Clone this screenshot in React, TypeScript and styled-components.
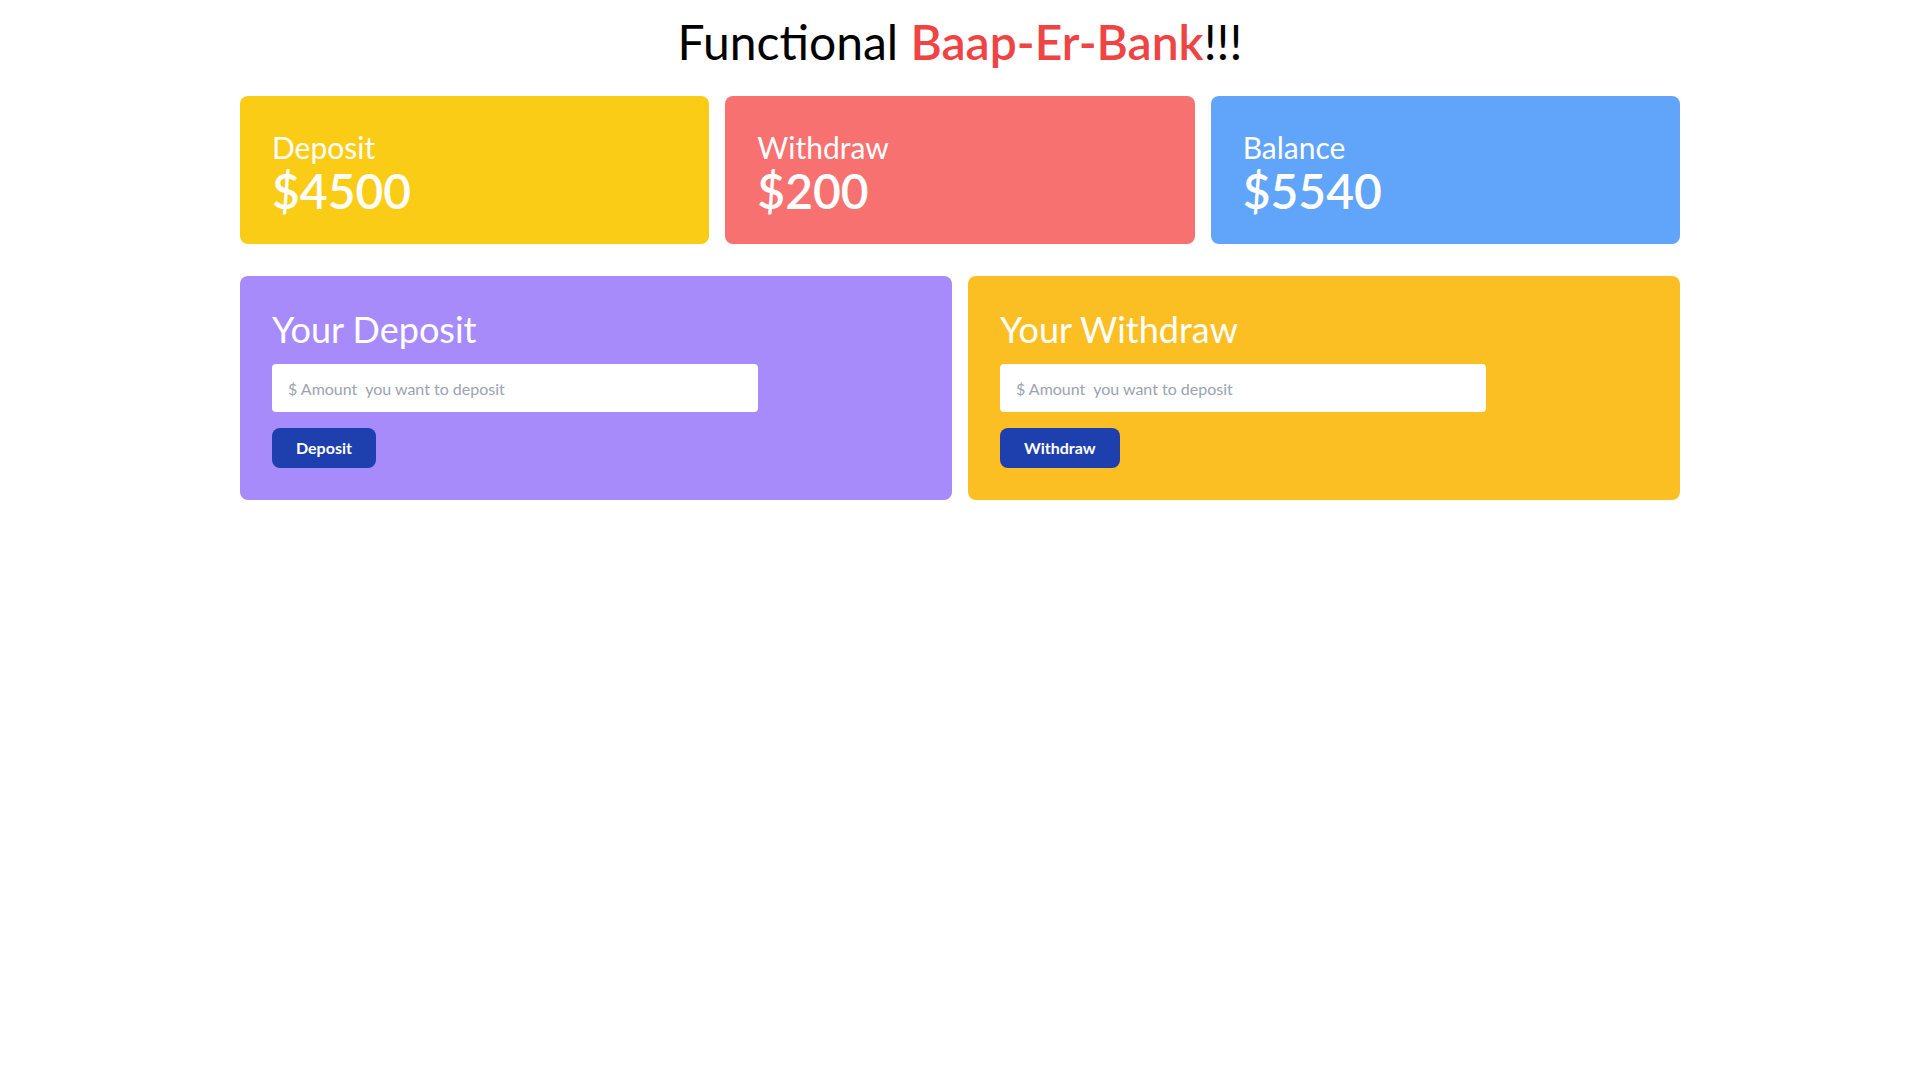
import React from "react";
import styled, { createGlobalStyle } from "styled-components";

const GlobalStyle = createGlobalStyle`
  * { box-sizing: border-box; }
  body {
    margin: 0;
    background: #ffffff;
    font-family: "Lato", "Open Sans", sans-serif;
    color: #000000;
  }
`;

const Page = styled.main`
  width: 75%;
  margin: 0 auto;
`;

const Title = styled.h1`
  margin: 18px 0 30px;
  text-align: center;
  font-size: 48px;
  line-height: 48px;
  font-weight: 400;
`;

const Brand = styled.span`
  color: #ef4444;
  font-weight: 600;
`;

const StatsGrid = styled.section`
  display: grid;
  grid-template-columns: repeat(3, 1fr);
  gap: 16px;
`;

const StatCard = styled.div<{ $bg: string }>`
  background: ${(p) => p.$bg};
  border-radius: 8px;
  padding: 33px 32px 29px;
  color: #ffffff;
`;

const StatLabel = styled.h2`
  margin: 0;
  font-size: 30px;
  line-height: 36px;
  font-weight: 400;
`;

const StatValue = styled.h3`
  margin: 2px 0 0;
  font-size: 48px;
  line-height: 48px;
  font-weight: 600;
`;

const ActionGrid = styled.section`
  display: grid;
  grid-template-columns: repeat(2, 1fr);
  gap: 16px;
  margin-top: 32px;
`;

const ActionCard = styled.div<{ $bg: string }>`
  background: ${(p) => p.$bg};
  border-radius: 8px;
  padding: 32px;
`;

const ActionTitle = styled.h2`
  margin: 1px 0 -1px;
  color: #ffffff;
  font-size: 36px;
  line-height: 40px;
  font-weight: 400;
`;

const AmountInput = styled.input`
  display: block;
  width: 75%;
  margin-top: 16px;
  padding: 12px 16px;
  border: none;
  border-radius: 4px;
  background: #ffffff;
  font-family: inherit;
  font-size: 16px;
  line-height: 24px;
  height: 48px;
  outline: none;
  &::placeholder {
    color: #9ca3af;
  }
`;

const ActionButton = styled.button`
  display: block;
  margin-top: 16px;
  padding: 8px 24px;
  border: none;
  border-radius: 8px;
  background: #1e40af;
  color: #ffffff;
  font-family: inherit;
  font-size: 16px;
  line-height: 24px;
  font-weight: 700;
  cursor: pointer;
`;

const stats = [
  { label: "Deposit", value: "$4500", bg: "#facc15" },
  { label: "Withdraw", value: "$200", bg: "#f87171" },
  { label: "Balance", value: "$5540", bg: "#60a5fa" },
];

const actions = [
  { title: "Your Deposit", button: "Deposit", bg: "#a78bfa" },
  { title: "Your Withdraw", button: "Withdraw", bg: "#fbbf24" },
];

export default function App() {
  return (
    <>
      <GlobalStyle />
      <Page>
        <Title>
          Functional <Brand>Baap-Er-Bank</Brand>!!!
        </Title>
        <StatsGrid>
          {stats.map((s) => (
            <StatCard key={s.label} $bg={s.bg}>
              <StatLabel>{s.label}</StatLabel>
              <StatValue>{s.value}</StatValue>
            </StatCard>
          ))}
        </StatsGrid>
        <ActionGrid>
          {actions.map((a) => (
            <ActionCard key={a.title} $bg={a.bg}>
              <ActionTitle>{a.title}</ActionTitle>
              <AmountInput type="text" placeholder="$ Amount  you want to deposit" />
              <ActionButton>{a.button}</ActionButton>
            </ActionCard>
          ))}
        </ActionGrid>
      </Page>
    </>
  );
}
